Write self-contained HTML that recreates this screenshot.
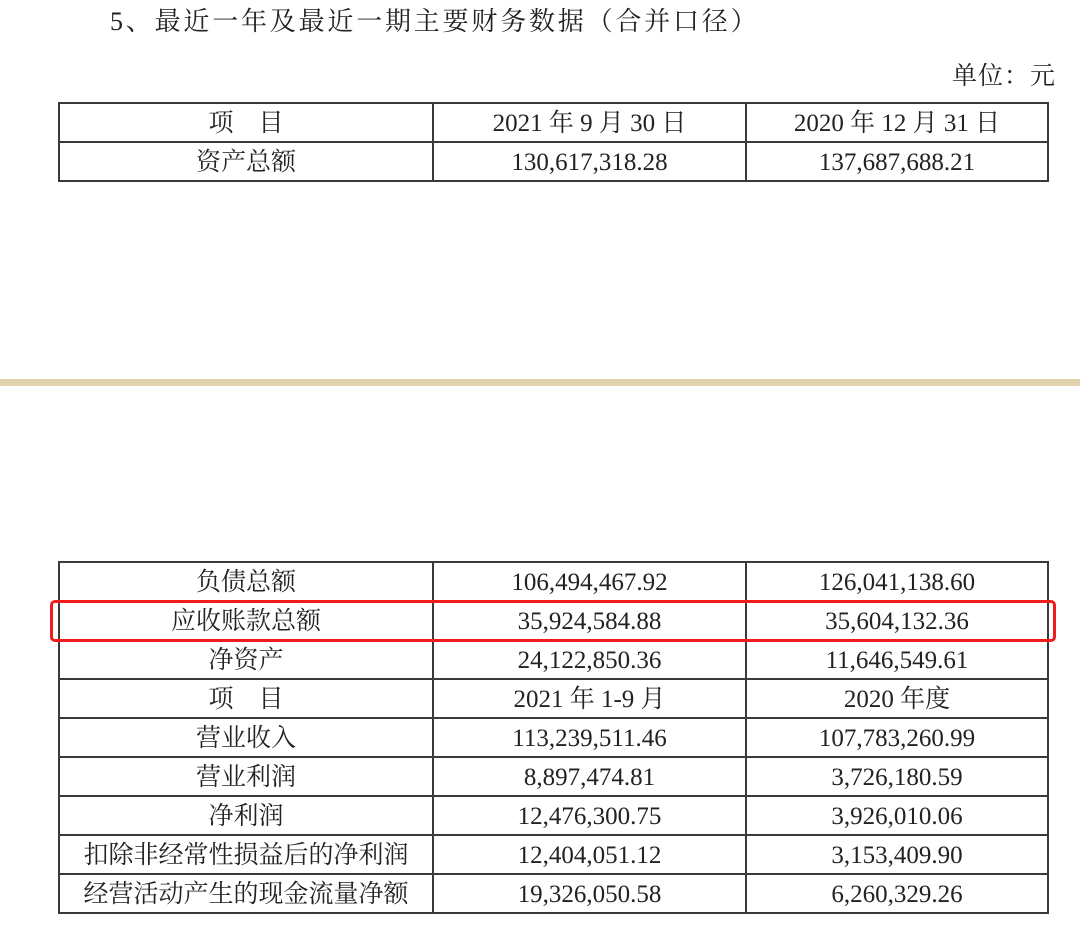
<!DOCTYPE html>
<html><head><meta charset="utf-8"><style>
body{margin:0;width:1080px;height:926px;background:#fff;position:relative;overflow:hidden;font-family:"Liberation Serif","Noto Serif CJK SC",serif;color:#222}
.t{position:absolute;left:58px;width:989px;border-collapse:collapse;table-layout:fixed;font-size:25px}
.t td{border:2px solid #3a3a3a;text-align:center;padding:2px 0 0 0;height:35px;line-height:35px;white-space:nowrap;overflow:hidden}
.title{position:absolute;left:110px;top:1px;font-size:26px;letter-spacing:2.8px}
.unit{position:absolute;right:24px;top:56px;font-size:25px;letter-spacing:1px}
.sep{position:absolute;left:0;width:1080px;top:379px;height:7px;background:#e2d1ad}
.red{position:absolute;left:50px;top:600px;width:1000px;height:36px;border:3px solid #ee1c1c;border-radius:5px}
</style></head><body>
<div class="title">5、最近一年及最近一期主要财务数据（合并口径）</div>
<div class="unit">单位：元</div>
<table class="t" style="top:102px">
<colgroup><col style="width:374px"><col style="width:313px"><col style="width:302px"></colgroup>
<tr><td>项　目</td><td>2021 年 9 月 30 日</td><td>2020 年 12 月 31 日</td></tr>
<tr><td>资产总额</td><td>130,617,318.28</td><td>137,687,688.21</td></tr>
</table>
<div class="sep"></div>
<table class="t" style="top:561px">
<colgroup><col style="width:374px"><col style="width:313px"><col style="width:302px"></colgroup>
<tr><td>负债总额</td><td>106,494,467.92</td><td>126,041,138.60</td></tr>
<tr><td>应收账款总额</td><td>35,924,584.88</td><td>35,604,132.36</td></tr>
<tr><td>净资产</td><td>24,122,850.36</td><td>11,646,549.61</td></tr>
<tr><td>项　目</td><td>2021 年 1-9 月</td><td>2020 年度</td></tr>
<tr><td>营业收入</td><td>113,239,511.46</td><td>107,783,260.99</td></tr>
<tr><td>营业利润</td><td>8,897,474.81</td><td>3,726,180.59</td></tr>
<tr><td>净利润</td><td>12,476,300.75</td><td>3,926,010.06</td></tr>
<tr><td>扣除非经常性损益后的净利润</td><td>12,404,051.12</td><td>3,153,409.90</td></tr>
<tr><td>经营活动产生的现金流量净额</td><td>19,326,050.58</td><td>6,260,329.26</td></tr>
</table>
<div class="red"></div>
</body></html>
